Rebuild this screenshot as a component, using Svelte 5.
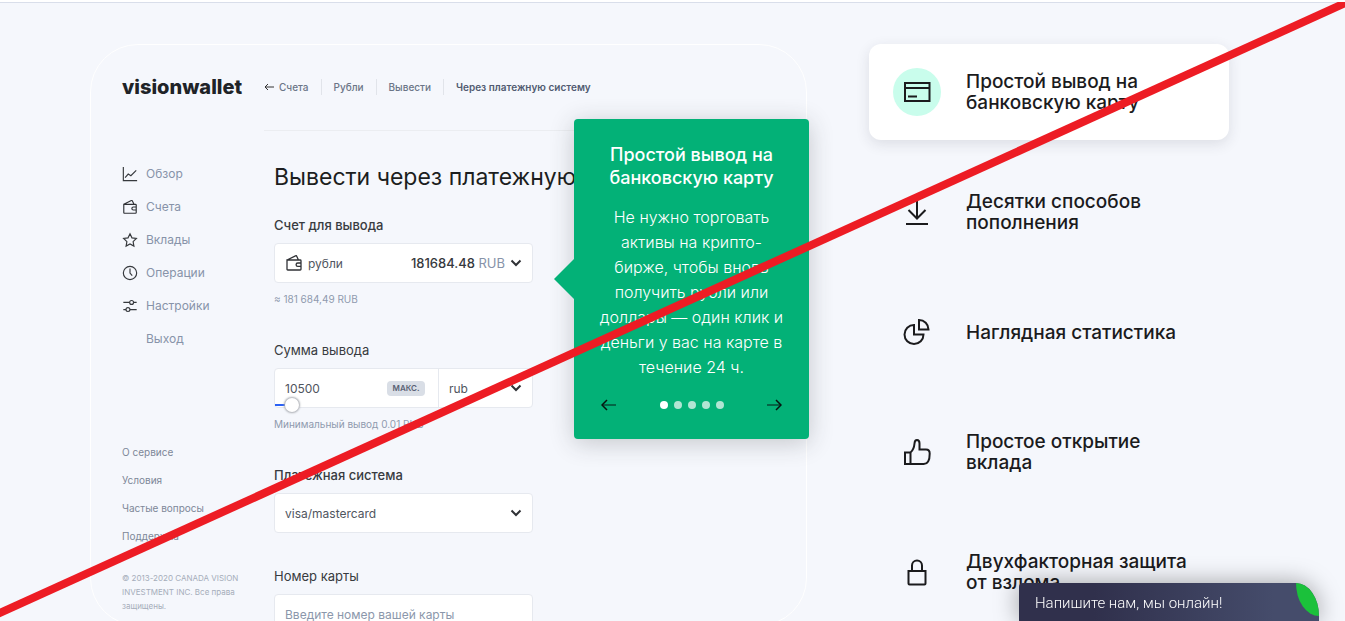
<script>
  const crumbs = ['Рубли', 'Вывести'];
  const nav = [
    { icon: 'chart', text: 'Обзор' },
    { icon: 'wallet', text: 'Счета' },
    { icon: 'star', text: 'Вклады' },
    { icon: 'clock', text: 'Операции' },
    { icon: 'sliders', text: 'Настройки' },
    { icon: '', text: 'Выход' }
  ];
  const links = ['О сервисе', 'Условия', 'Частые вопросы', 'Поддержка'];
  const features = [
    { icon: 'card', text: 'Простой вывод на банковскую карту' },
    { icon: 'download', text: 'Десятки способов пополнения' },
    { icon: 'pie', text: 'Наглядная статистика' },
    { icon: 'thumb', text: 'Простое открытие вклада' },
    { icon: 'lock', text: 'Двухфакторная защита от взлома' }
  ];
  let active = $state(0);
  let amount = $state('10500');
</script>

{#snippet wallet()}
  <svg class="wallet" viewBox="0 0 18 18" aria-hidden="true">
    <path d="M2 6h13.2q.8 0 .8.8v8.4q0 .8-.8.8H2.8q-.8 0-.8-.8zM2 6l8.5-4.2q.8-.4 1.2.4L13.500 6M16 9h-3.200a1.700 1.700 0 0 0 0 3.400H16" />
  </svg>
{/snippet}

{#snippet chevron()}
  <svg class="chevron" viewBox="0 0 12 8" aria-hidden="true"><path d="M1.500 1.500 6 6l4.500-4.500" /></svg>
{/snippet}

<div class="page">
  <main class="layout">
    <section class="panel">
      <header class="top">
        <a class="logo" href="#home">visionwallet</a>
        <nav class="crumbs" aria-label="Путь">
          <a href="#accounts">
            <svg viewBox="0 0 10 8" aria-hidden="true"><path d="M10 4H1M4 1 1 4l3 3" /></svg>
            Счета
          </a>
          {#each crumbs as crumb}<a href="#crumb">{crumb}</a>{/each}
          <b>Через платежную систему</b>
        </nav>
      </header>

      <div class="columns">
        <aside>
          <nav class="menu">
            {#each nav as item}
              <a href="#menu">
                <span class="menu-icon">
                  {#if item.icon === 'wallet'}
                    {@render wallet()}
                  {:else if item.icon}
                    <svg viewBox="0 0 18 18" aria-hidden="true">
                      {#if item.icon === 'chart'}
                        <path d="M1.500 1v15.500H17M3.500 13l3.500-4 3 2 6-6" />
                      {:else if item.icon === 'star'}
                        <path d="m9 2 2.200 4.600 5 .7-3.700 3.500.9 5L9 13.400l-4.400 2.400.9-5L1.800 7.300l5-.7z" />
                      {:else if item.icon === 'clock'}
                        <circle cx="9" cy="9" r="7.500" /><path d="M9 4v5l2.500 3" />
                      {:else}
                        <path d="M1.500 5h7M13 5h3.500M1.500 13h3M9 13h7.500" />
                        <circle cx="10.800" cy="5" r="2.200" /><circle cx="6.700" cy="13" r="2.200" />
                      {/if}
                    </svg>
                  {/if}
                </span>
                {item.text}
              </a>
            {/each}
          </nav>
          <nav class="links">
            {#each links as link}<a href="#info">{link}</a>{/each}
          </nav>
          <p class="copy">© 2013-2020 CANADA VISION INVESTMENT INC. Все права защищены.</p>
        </aside>

        <form class="form">
          <h1>Вывести через платежную</h1>
          <div class="group">
            <label class="strong" for="account">Счет для вывода</label>
            <div class="field">
              {@render wallet()}
              <select id="account"><option>рубли</option></select>
              <span class="balance">181684.48 <i>RUB</i></span>
              {@render chevron()}
            </div>
            <p class="hint">≈ 181 684,49 RUB</p>
          </div>
          <div class="group">
            <label for="amount">Сумма вывода</label>
            <div class="field split">
              <div class="amount">
                <input id="amount" type="text" bind:value={amount} />
                <button class="max" type="button">МАКС.</button>
                <input class="range" type="range" min="0" max="1000" value="66" aria-label="Сумма" />
              </div>
              <div class="currency">
                <select aria-label="Валюта"><option>rub</option></select>
                {@render chevron()}
              </div>
            </div>
            <p class="hint">Минимальный вывод 0.01 RUB</p>
          </div>
          <div class="group">
            <label class="strong" for="system">Платежная система</label>
            <div class="field">
              <select id="system"><option>visa/mastercard</option></select>
              {@render chevron()}
            </div>
          </div>
          <div class="group">
            <label for="number">Номер карты</label>
            <div class="field"><input id="number" type="text" placeholder="Введите номер вашей карты" /></div>
          </div>
        </form>
      </div>

      <article class="tip">
        <h2>Простой вывод на банковскую карту</h2>
        <p>Не нужно торговать активы на крипто-бирже, чтобы вновь получить рубли или доллары — один клик и деньги у вас на карте в течение 24 ч.</p>
        <div class="pager">
          <button type="button" aria-label="Назад" onclick={() => (active = (active + 4) % 5)}>
            <svg viewBox="0 0 16 12" aria-hidden="true"><path class="shaft" d="M1 6h14" /><path d="M6 1 1 6l5 5" /></svg>
          </button>
          <div class="dots">
            {#each features as feature, i}
              <button type="button" class:on={i === active} aria-label={feature.text} onclick={() => (active = i)}></button>
            {/each}
          </div>
          <button type="button" aria-label="Вперёд" onclick={() => (active = (active + 1) % 5)}>
            <svg viewBox="0 0 16 12" aria-hidden="true"><path class="shaft" d="M1 6h14" /><path d="m10 1 5 5-5 5" /></svg>
          </button>
        </div>
      </article>
    </section>

    <section class="features">
      {#each features as feature, i}
        <button type="button" class="feature" class:active={i === active} onclick={() => (active = i)}>
          <span class="badge">
            <svg viewBox="0 0 28 28" aria-hidden="true">
              {#if feature.icon === 'card'}
                <path d="M2 5h24.500v18H2zM2 10h24.500M5 18.500h9" />
              {:else if feature.icon === 'download'}
                <path d="M14 2v18M5.500 12l8.500 8.500 8.500-8.500M3 26h22" />
              {:else if feature.icon === 'pie'}
                <path d="M11 7a9.500 9.500 0 1 0 9.500 9.500H11zM16 2v9.500h9.500A9.500 9.500 0 0 0 16 2z" />
              {:else if feature.icon === 'thumb'}
                <path d="M2 14.500H7.500V26H2zM7.500 14.500q3.500-3 4-9 .2-3.500 2.500-3.500 2.500 0 2.500 3.500V11.500h6.500q3.700 0 3.700 4 0 10.500-6 10.500H7.500" />
              {:else}
                <path d="M5.500 13h17v12.500q0 1-1 1h-15q-1 0-1-1zM9 13V7.500a5 5 0 0 1 10 0V13" />
              {/if}
            </svg>
          </span>
          <span class="caption">{feature.text}</span>
        </button>
      {/each}
    </section>
  </main>

  <button type="button" class="chat">Напишите нам, мы онлайн!<span class="leaf"></span></button>

  <svg class="strike" viewBox="0 0 1345 621" preserveAspectRatio="none" aria-hidden="true">
    <path d="M-20 622 1365 -6" />
  </svg>
</div>

<style>
  :global(body) {
    margin: 0;
    background: #f5f7fc;
  }
  .page {
    position: relative;
    box-sizing: border-box;
    height: 100vh;
    overflow: hidden;
    padding: 42px 116px 0 90px;
    background: #f5f7fc;
    border-top: 2px solid #fff;
    box-shadow: inset 0 1px #d9deea;
    font-family: Inter, "Noto Sans", sans-serif;
    color: #1c1e20;
  }
  .page :is(h1, h2, p) {
    margin: 0;
  }
  a {
    color: inherit;
    text-decoration: none;
  }
  button,
  input,
  select {
    margin: 0;
    padding: 0;
    border: 0;
    background: none;
    font: inherit;
    color: inherit;
    appearance: none;
    outline: none;
  }
  button {
    cursor: pointer;
  }
  svg {
    display: block;
    fill: none;
    stroke: currentColor;
  }
  .layout {
    display: grid;
    grid-template-columns: minmax(0, 1fr) 360px;
    gap: 62px;
    align-items: start;
  }

  .panel {
    position: relative;
    box-sizing: border-box;
    padding: 31px 30px 0 31px;
    border: 1px solid #fff;
    border-radius: 48px;
    height: 582px;
  }
  .top {
    display: flex;
    gap: 20px;
    height: 55px;
  }
  .logo {
    width: 122px;
    font-size: 20px;
    font-weight: 800;
    line-height: 22px;
    color: #202327;
  }
  .crumbs {
    display: flex;
    flex: 1;
    align-items: flex-start;
    border-bottom: 1px solid #ebedf1;
    font-size: 10px;
    font-weight: 500;
    line-height: 16px;
    color: #6b7587;
  }
  .crumbs > * {
    display: flex;
    align-items: center;
    gap: 5px;
    margin-top: 3px;
    padding: 0 12px;
    border-left: 1px solid #e1e4ea;
  }
  .crumbs > :first-child {
    padding-left: 0;
    border: 0;
  }
  .crumbs svg {
    width: 10px;
    height: 8px;
    color: #333;
  }
  .crumbs b {
    font-weight: 600;
    color: #515b71;
  }
  .columns {
    display: grid;
    grid-template-columns: 122px minmax(0, 1fr);
    gap: 30px;
  }
  .menu {
    display: grid;
    padding-top: 26px;
    font-size: 12px;
    line-height: 33px;
    color: #8793a9;
  }
  .menu a {
    display: flex;
    align-items: center;
    gap: 8px;
  }
  .menu-icon {
    width: 16px;
    color: #36393d;
  }
  .menu-icon svg {
    width: 16px;
    height: 16px;
    stroke-width: 1.300;
  }
  .links {
    display: grid;
    padding-top: 83px;
    font-size: 10px;
    line-height: 28px;
    color: #7d8798;
  }
  .page .copy {
    padding-top: 21px;
    font-size: 8px;
    line-height: 14px;
    color: #a5adba;
  }

  .form {
    width: 259px;
  }
  .form h1 {
    padding: 30px 0 22px;
    font-size: 23px;
    font-weight: 400;
    line-height: 32px;
    white-space: nowrap;
  }
  .group {
    margin-bottom: 33px;
  }
  label {
    display: block;
    margin-bottom: 8px;
    font-size: 13px;
    line-height: 20px;
    color: #383b40;
  }
  .strong {
    font-weight: 500;
  }
  .field {
    display: flex;
    align-items: center;
    gap: 5px;
    box-sizing: border-box;
    height: 40px;
    padding: 0 10px;
    border: 1px solid #e6e9ef;
    border-radius: 4px;
    background: #fff;
    font-size: 12px;
    color: #50555e;
  }
  .field > select,
  .field > input,
  .amount > input[type='text'],
  .currency > select {
    flex: 1;
    width: 0;
    min-width: 0;
  }
  .field ::placeholder {
    color: #8b97ab;
    opacity: 1;
  }
  .wallet {
    width: 18px;
    height: 18px;
    stroke-width: 1.300;
    color: #303236;
  }
  .chevron {
    flex: none;
    width: 12px;
    height: 8px;
    stroke-width: 2;
    color: #303236;
  }
  .balance {
    font-size: 13px;
    font-weight: 500;
    color: #36393d;
  }
  .balance i {
    font-style: normal;
    font-weight: 400;
    color: #8793a9;
  }
  .split {
    padding: 0;
    gap: 0;
    align-items: stretch;
  }
  .amount,
  .currency {
    display: flex;
    align-items: center;
    padding: 0 10px;
  }
  .amount {
    position: relative;
    flex: 1;
    padding-right: 13px;
  }
  .currency {
    width: 73px;
    border-left: 1px solid #e6e9ef;
  }
  .max {
    width: 38px;
    border-radius: 4px;
    background: #d9dee6;
    font-size: 8px;
    font-weight: 600;
    line-height: 15px;
    color: #596274;
  }
  .range {
    position: absolute;
    left: 0;
    bottom: -6px;
    width: 100%;
    height: 16px;
    background: linear-gradient(90deg, #2b62f5 12px, transparent 12px) center / 100% 2px no-repeat;
  }
  .range::-webkit-slider-thumb {
    appearance: none;
    width: 14px;
    height: 14px;
    border-radius: 50%;
    background: #fff;
    box-shadow: 0 0 2px 1px #a9acb2;
  }
  .page .hint {
    margin-top: 8px;
    font-size: 10px;
    line-height: 16px;
    color: #8f9aae;
  }

  .tip {
    position: absolute;
    top: 74px;
    right: -3px;
    box-sizing: border-box;
    width: 235px;
    height: 320px;
    padding: 24px 24px 0;
    border-radius: 4px;
    background: #03b177;
    box-shadow: 0 4px 24px rgb(40 44 50 / 24%);
    text-align: center;
    color: #fff;
  }
  .tip::before {
    content: '';
    position: absolute;
    top: 140px;
    left: -20px;
    width: 20px;
    height: 40px;
    background: inherit;
    clip-path: polygon(100% 0, 100% 100%, 0 50%);
  }
  .tip h2 {
    font-size: 18px;
    font-weight: 500;
    line-height: 23px;
  }
  .page .tip p {
    margin: 16px 0 19px;
    font-size: 16px;
    font-weight: 300;
    line-height: 25px;
  }
  .pager {
    display: flex;
    align-items: center;
    justify-content: space-between;
    padding: 0 3px;
    color: #06140f;
  }
  .pager svg {
    width: 16px;
    height: 12px;
    stroke-width: 1.500;
  }
  .shaft {
    stroke: #064d36;
  }
  .dots {
    display: flex;
    gap: 6px;
  }
  .dots button {
    width: 8px;
    height: 8px;
    border-radius: 50%;
    background: #b0e5d3;
  }
  .dots .on {
    background: #fff;
  }

  .features {
    display: grid;
    gap: 24px;
  }
  .feature {
    display: flex;
    align-items: center;
    gap: 25px;
    height: 96px;
    padding: 0 24px;
    border-radius: 12px;
    text-align: left;
    font-size: 19px;
    font-weight: 500;
    line-height: 21px;
    color: #1b1b1d;
  }
  .badge {
    display: grid;
    flex: none;
    place-items: center;
    width: 48px;
    height: 48px;
    border-radius: 50%;
  }
  .badge svg {
    width: 28px;
    height: 28px;
    stroke-width: 2;
  }
  .caption {
    width: 224px;
  }
  .active {
    background: #fff;
    box-shadow: 0 4px 14px rgb(40 44 60 / 12%);
  }
  .active .badge {
    background: #c9fdec;
  }

  .chat {
    position: fixed;
    right: 26px;
    bottom: 0;
    width: 300px;
    height: 38px;
    padding: 2px 16px 0;
    border-radius: 4px 23px 0 0 / 4px 33px 0 0;
    background: linear-gradient(90deg, #30304c 25%, #454c6b 85%);
    box-shadow: 0 0 24px rgb(0 0 0 / 36%);
    text-align: left;
    font-family: Roboto, sans-serif;
    font-size: 15px;
    font-weight: 300;
    color: #fff;
  }
  .leaf {
    position: absolute;
    top: 0;
    right: 0;
    width: 23px;
    height: 33px;
    border-radius: 0 100% 0 100%;
    background: #1bc13b;
  }
  .strike {
    position: absolute;
    top: -2px;
    left: 0;
    width: 100%;
    height: calc(100% + 2px);
    stroke: #ed1c24;
    stroke-width: 8;
    pointer-events: none;
  }
</style>
